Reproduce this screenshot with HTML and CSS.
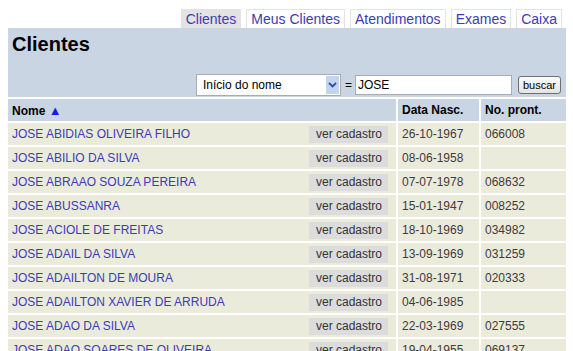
FILE: index.html
```html
<!DOCTYPE html>
<html lang="pt">
<head>
    <meta charset="UTF-8">
    <title>Clientes</title>
    <link rel="stylesheet" href="styles.css">
</head>
<body>

    <!-- Tabs -->
    <div class="tabs">
        <a href="#" class="tab active">Clientes</a>
        <a href="#" class="tab">Meus Clientes</a>
        <a href="#" class="tab">Atendimentos</a>
        <a href="#" class="tab">Exames</a>
        <a href="#" class="tab">Caixa</a>
    </div>

    <!-- Header panel with search -->
    <div class="panel">
        <h1>Clientes</h1>
        <form class="search">
            <div class="select">
                <span>Início do nome</span>
                <span class="arrow">
                    <svg width="9" height="6" viewBox="0 0 9 6"><path d="M1 1 L4.5 4.5 L8 1" fill="none" stroke="#2b4f9e" stroke-width="1.8"/></svg>
                </span>
            </div>
            <span class="eq">=</span>
            <input type="text" value="JOSE">
            <button type="button">buscar</button>
        </form>
    </div>

    <!-- Result list -->
    <table class="list">
        <thead>
            <tr>
                <th>Nome <span class="sort">▲</span></th>
                <th class="col-date">Data Nasc.</th>
                <th class="col-num">No. pront.</th>
            </tr>
        </thead>
        <tbody>
            <tr><td><div class="name"><a href="#">JOSE ABIDIAS OLIVEIRA FILHO</a><span class="btn">ver cadastro</span></div></td><td>26-10-1967</td><td>066008</td></tr>
            <tr><td><div class="name"><a href="#">JOSE ABILIO DA SILVA</a><span class="btn">ver cadastro</span></div></td><td>08-06-1958</td><td></td></tr>
            <tr><td><div class="name"><a href="#">JOSE ABRAAO SOUZA PEREIRA</a><span class="btn">ver cadastro</span></div></td><td>07-07-1978</td><td>068632</td></tr>
            <tr><td><div class="name"><a href="#">JOSE ABUSSANRA</a><span class="btn">ver cadastro</span></div></td><td>15-01-1947</td><td>008252</td></tr>
            <tr><td><div class="name"><a href="#">JOSE ACIOLE DE FREITAS</a><span class="btn">ver cadastro</span></div></td><td>18-10-1969</td><td>034982</td></tr>
            <tr><td><div class="name"><a href="#">JOSE ADAIL DA SILVA</a><span class="btn">ver cadastro</span></div></td><td>13-09-1969</td><td>031259</td></tr>
            <tr><td><div class="name"><a href="#">JOSE ADAILTON DE MOURA</a><span class="btn">ver cadastro</span></div></td><td>31-08-1971</td><td>020333</td></tr>
            <tr><td><div class="name"><a href="#">JOSE ADAILTON XAVIER DE ARRUDA</a><span class="btn">ver cadastro</span></div></td><td>04-06-1985</td><td></td></tr>
            <tr><td><div class="name"><a href="#">JOSE ADAO DA SILVA</a><span class="btn">ver cadastro</span></div></td><td>22-03-1969</td><td>027555</td></tr>
            <tr><td><div class="name"><a href="#">JOSE ADAO SOARES DE OLIVEIRA</a><span class="btn">ver cadastro</span></div></td><td>19-04-1955</td><td>069137</td></tr>
        </tbody>
    </table>

</body>
</html>
```

FILE: styles.css
```css
/* General */
body {
    font-family: "Liberation Sans", Arial, sans-serif;
    margin: 0 7px 0 8px;
    background: #fff;
    color: #000;
}

/* Tabs */
.tabs {
    display: flex;
    justify-content: flex-end;
    gap: 5px;
    padding: 9px 4px 0 0;
}

.tab {
    font-size: 14px;
    line-height: 18px;
    padding: 0 4px;
    border: 1px solid #dfe3ea;
    border-bottom: none;
    color: #3c3cb4;
    text-decoration: none;
    background: #fff;
}

.tab.active {
    background: #e3e3e3;
    border-color: #e3e3e3;
}

/* Panel */
.panel {
    background: #c9d5e3;
    padding: 4px 5px 1px 4px;
}

.panel h1 {
    font-size: 20px;
    line-height: 24px;
    margin: 0;
}

.search {
    display: flex;
    align-items: center;
    justify-content: flex-end;
    margin-top: 17px;
    height: 23px;
}

.select {
    display: flex;
    align-items: center;
    justify-content: space-between;
    width: 145px;
    height: 22px;
    box-sizing: border-box;
    background: #fff;
    border: 1px solid #a5acb5;
    font-size: 12px;
    padding-left: 6px;
}

.select .arrow {
    width: 13px;
    height: 18px;
    margin-right: 1px;
    background: #c3d3f0;
    display: flex;
    align-items: center;
    justify-content: center;
}

.eq {
    font-size: 12px;
    margin: 0 3px 0 4px;
}

.search input {
    width: 157px;
    height: 20px;
    box-sizing: border-box;
    border: 1px solid #a5acb5;
    font-family: inherit;
    font-size: 12px;
    padding: 0 2px;
    margin: 0;
}

.search button {
    margin-left: 6px;
    height: 18px;
    padding: 0 4px;
    font-family: inherit;
    font-size: 11px;
    border: 1px solid #6f6f6f;
    border-radius: 3px;
    background: linear-gradient(#fbfbfb, #e4e4e4);
    color: #000;
}

/* Result list */
.list {
    width: 100%;
    border-collapse: separate;
    border-spacing: 0;
    margin-top: 2px;
    font-size: 12px;
}

.list th,
.list td {
    height: 22px;
    padding: 0 4px;
    text-align: left;
    border-bottom: 2px solid #fff;
    border-left: 2px solid #fff;
    white-space: nowrap;
}

.list th:first-child,
.list td:first-child {
    border-left: none;
}

.list th {
    background: #c9d5e3;
    font-weight: bold;
}

.list td {
    background: #ebebdb;
    color: #3c3c3c;
}

.col-date {
    width: 73px;
}

.col-num {
    width: 77px;
}

.sort {
    color: #1a1adc;
    font-size: 13px;
}

.name {
    display: flex;
    align-items: center;
    justify-content: space-between;
}

.list a {
    color: #3c3cb4;
    text-decoration: none;
}

.btn {
    background: #dcdcdc;
    line-height: 17px;
    padding: 0 6px 0 7px;
    margin-right: 4px;
    color: #333;
}
```
